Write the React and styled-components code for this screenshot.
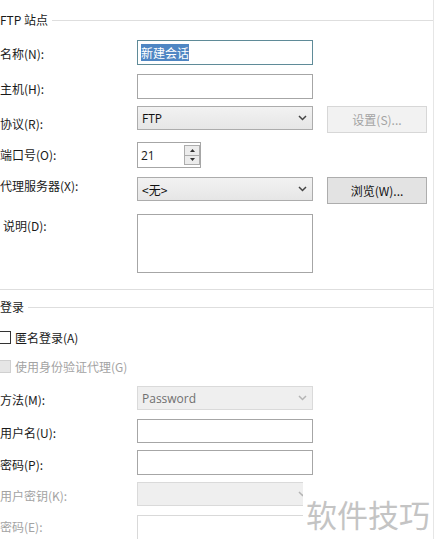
import React from 'react';
import styled, { createGlobalStyle, css } from 'styled-components';

const GlobalStyle = createGlobalStyle`
  html, body {
    margin: 0;
    padding: 0;
    background: #fff;
  }
  body {
    font-family: 'Noto Sans CJK SC', 'Noto Sans', sans-serif;
    font-size: 12px;
    color: #1a1a1a;
  }
`;

const Page = styled.div`
  position: relative;
  width: 433px;
  height: 539px;
  overflow: hidden;
  border-right: 1px solid #e6e6e6;
  background: #fff;
`;

const GroupHeader = styled.div`
  display: flex;
  align-items: center;
  gap: 4px;
  height: 16px;
  line-height: 16px;
  margin-top: ${p => p.$top}px;
  white-space: nowrap;

  &::after {
    content: '';
    flex: 1;
    height: 1px;
    background: #dedede;
  }
`;

const Divider = styled.div`
  height: 1px;
  margin-top: ${p => p.$top}px;
  background: #dedede;
`;

const Row = styled.div`
  display: grid;
  grid-template-columns: 137px 176px 14px 100px;
  align-items: start;
  height: ${p => p.$h}px;
  margin-top: ${p => p.$top}px;
`;

const Label = styled.div`
  height: 16px;
  line-height: 16px;
  margin-top: ${p => p.$y - 8}px;
  margin-left: ${p => p.$x || 0}px;
  white-space: nowrap;
  color: ${p => (p.$disabled ? '#a3a3a3' : '#1a1a1a')};
`;

const TextBox = styled.div`
  box-sizing: border-box;
  height: ${p => p.$h || 25}px;
  border: 1px solid ${p => (p.$focused ? '#5f8b98' : p.$disabled ? '#d9d9d9' : '#a6a6a6')};
  background: #fff;
  padding: 3px 3px;
  display: flex;
  align-items: ${p => (p.$multi ? 'flex-start' : 'center')};
`;

const Selected = styled.span`
  background: #4f86c3;
  color: #fff;
  padding: 1px 0;
  line-height: 15px;
`;

const Select = styled.div`
  box-sizing: border-box;
  height: 24px;
  border: 1px solid ${p => (p.$disabled ? '#dadada' : '#acacac')};
  background: ${p =>
    p.$disabled ? '#efefef' : 'linear-gradient(#f2f2f2, #e6e6e6)'};
  color: ${p => (p.$disabled ? '#707070' : '#111')};
  display: flex;
  align-items: center;
  justify-content: space-between;
  padding: 0 5px 0 4px;
  ${p =>
    p.$latin &&
    css`
      font-family: 'Open Sans', 'Noto Sans', sans-serif;
      font-size: 12px;
    `}
`;

const Button = styled.div`
  box-sizing: border-box;
  height: 27px;
  border: 1px solid ${p => (p.$disabled ? '#d7d7d7' : '#adadad')};
  background: ${p => (p.$disabled ? '#f2f2f2' : '#e3e3e3')};
  color: ${p => (p.$disabled ? '#a3a3a3' : '#111')};
  display: flex;
  align-items: center;
  justify-content: center;
`;

const SpinBox = styled.div`
  box-sizing: border-box;
  width: 64px;
  height: 26px;
  border: 1px solid #a6a6a6;
  display: flex;
  align-items: center;
  padding: 2px 0 2px 3px;
`;

const SpinValue = styled.span`
  flex: 1;
  font-family: 'Open Sans', 'Noto Sans', sans-serif;
`;

const SpinButtons = styled.div`
  display: flex;
  flex-direction: column;
  width: 16px;
  height: 20px;
`;

const SpinButton = styled.div`
  flex: 1;
  box-sizing: border-box;
  border: 1px solid #adadad;
  margin-top: ${p => (p.$down ? '-1px' : 0)};
  background: #ececec;
  display: flex;
  align-items: center;
  justify-content: center;
`;

const CheckRow = styled.label`
  display: flex;
  align-items: center;
  gap: 4px;
  height: 16px;
  margin-top: ${p => p.$top}px;
  margin-left: -2px;
  color: ${p => (p.$disabled ? '#a3a3a3' : '#1a1a1a')};
`;

const Box = styled.span`
  box-sizing: border-box;
  width: 13px;
  height: 13px;
  border: 1px solid ${p => (p.$disabled ? '#d0d0d0' : '#333')};
  background: ${p => (p.$disabled ? '#e6e6e6' : '#fff')};
`;

const Watermark = styled.div`
  position: absolute;
  left: 303px;
  top: 477px;
  right: 0;
  bottom: 0;
  background: #fff;
  padding: 17px 0 0 3px;
  font-size: 31px;
  line-height: 40px;
  color: #c4c4c4;
  white-space: nowrap;
`;

const Chevron = ({ color = '#444' }) => (
  <svg width="9" height="6" viewBox="0 0 9 6">
    <path d="M1 1l3.5 3.5L8 1" fill="none" stroke={color} strokeWidth="1.5" />
  </svg>
);

const Arrow = ({ up }) => (
  <svg width="5" height="3" viewBox="0 0 5 3">
    <path d={up ? 'M0 3L2.5 0L5 3Z' : 'M0 0L2.5 3L5 0Z'} fill="#333" />
  </svg>
);

export default function App() {
  return (
    <>
      <GlobalStyle />
      <Page>
        <GroupHeader $top={12}>FTP 站点</GroupHeader>

        <Row $top={12} $h={25}>
          <Label $y={14}>名称(N):</Label>
          <TextBox $focused>
            <Selected>新建会话</Selected>
          </TextBox>
        </Row>

        <Row $top={9} $h={25}>
          <Label $y={15}>主机(H):</Label>
          <TextBox />
        </Row>

        <Row $top={7} $h={27}>
          <Label $y={18}>协议(R):</Label>
          <Select $latin>
            <span>FTP</span>
            <Chevron />
          </Select>
          <span />
          <Button $disabled>设置(S)...</Button>
        </Row>

        <Row $top={9} $h={26}>
          <Label $y={13}>端口号(O):</Label>
          <SpinBox>
            <SpinValue>21</SpinValue>
            <SpinButtons>
              <SpinButton>
                <Arrow up />
              </SpinButton>
              <SpinButton $down>
                <Arrow />
              </SpinButton>
            </SpinButtons>
          </SpinBox>
        </Row>

        <Row $top={9} $h={27}>
          <Label $y={9}>代理服务器(X):</Label>
          <Select>
            <span>&lt;无&gt;</span>
            <Chevron />
          </Select>
          <span />
          <Button>浏览(W)...</Button>
        </Row>

        <Row $top={10} $h={59}>
          <Label $y={12} $x={3}>说明(D):</Label>
          <TextBox $h={59} $multi />
        </Row>

        <Divider $top={16} />

        <GroupHeader $top={9}>登录</GroupHeader>

        <CheckRow $top={14}>
          <Box />
          匿名登录(A)
        </CheckRow>

        <CheckRow $top={13} $disabled>
          <Box $disabled />
          使用身份验证代理(G)
        </CheckRow>

        <Row $top={12} $h={25}>
          <Label $y={14}>方法(M):</Label>
          <Select $disabled $latin>
            <span>Password</span>
            <Chevron color="#b5b5b5" />
          </Select>
        </Row>

        <Row $top={8} $h={24}>
          <Label $y={14}>用户名(U):</Label>
          <TextBox $h={24} />
        </Row>

        <Row $top={7} $h={25}>
          <Label $y={15}>密码(P):</Label>
          <TextBox />
        </Row>

        <Row $top={7} $h={24}>
          <Label $y={14} $disabled>用户密钥(K):</Label>
          <Select $disabled>
            <span />
            <Chevron color="#b5b5b5" />
          </Select>
        </Row>

        <Row $top={9} $h={26}>
          <Label $y={12} $disabled>密码(E):</Label>
          <TextBox $h={26} $disabled />
        </Row>

        <Watermark>软件技巧</Watermark>
      </Page>
    </>
  );
}
